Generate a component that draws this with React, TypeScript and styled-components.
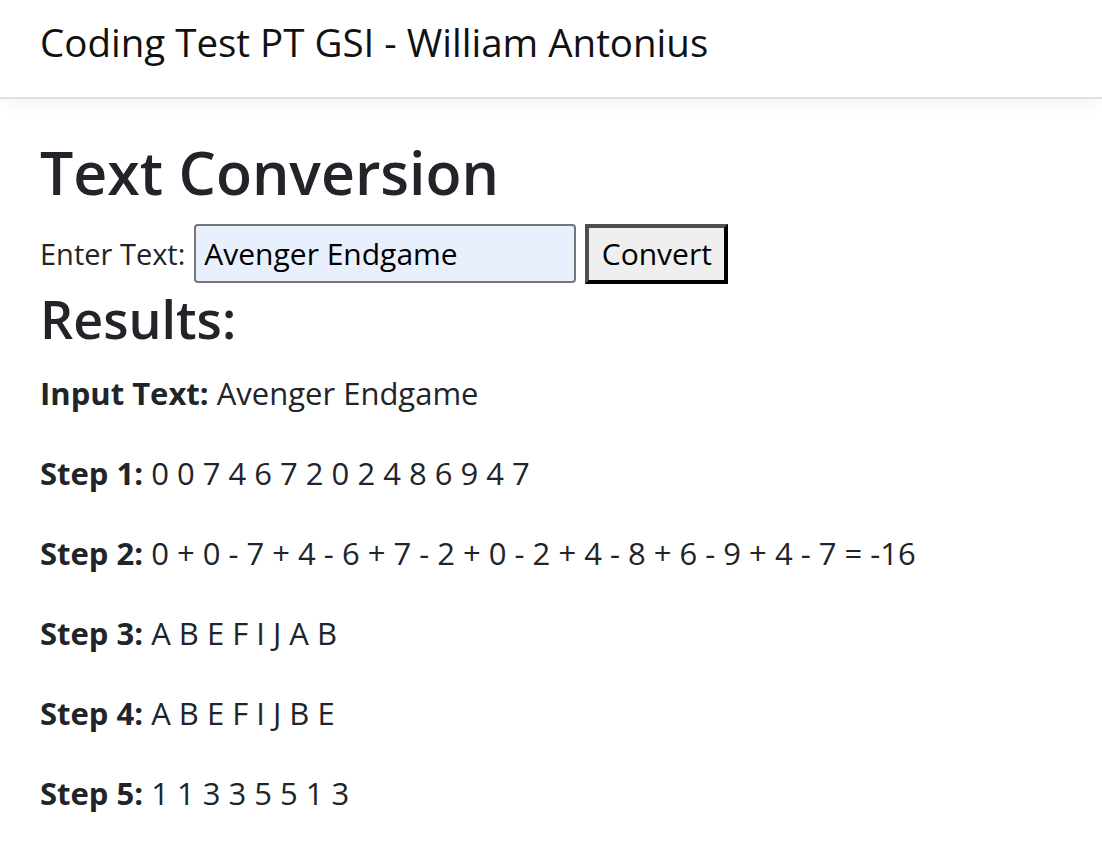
import React from "react";
import styled, { createGlobalStyle } from "styled-components";

const FONT = `"Open Sans", "Noto Sans", sans-serif`;

const GlobalStyle = createGlobalStyle`
  html, body { margin: 0; padding: 0; background: #fff; }
  body {
    font-family: ${FONT};
    color: #212529;
    font-size: 31px;
    line-height: 1.5;
  }
  * { box-sizing: border-box; }
`;

const Navbar = styled.header`
  height: 99px;
  padding: 12px 40px 0;
  background: #fff;
  border-bottom: 2px solid #dee2e6;
  box-shadow: 0 6px 14px rgba(0, 0, 0, 0.04);
`;

const Brand = styled.div`
  font-size: 38.5px;
  line-height: 60px;
  color: #111;
  white-space: nowrap;
`;

const Main = styled.main`
  padding: 38px 40px 0;
`;

const Title = styled.h1`
  margin: 0 0 16px;
  font-size: 59px;
  line-height: 1.2;
  font-weight: 600;
`;

const FormRow = styled.form`
  display: flex;
  align-items: center;
  gap: 9px;
  height: 60px;
`;

const Label = styled.label`
  font-size: 29px;
  line-height: 48px;
`;

const TextInput = styled.input`
  width: 382px;
  height: 59px;
  padding: 0 8px;
  font-family: ${FONT};
  font-size: 30px;
  color: #000;
  background: #e8f0fe;
  border: 2px solid #767676;
  border-radius: 4px;
  outline: none;
`;

const Button = styled.button`
  width: 143px;
  height: 60px;
  padding: 0;
  font-family: ${FONT};
  font-size: 30px;
  color: #000;
  background: #efefef;
  border: 4px solid;
  border-color: #4f4f4f #000 #000 #4f4f4f;
  border-radius: 0;
`;

const Subtitle = styled.h2`
  margin: 4px 0 19px;
  font-size: 52px;
  line-height: 1.2;
  font-weight: 600;
`;

const Line = styled.p`
  margin: 0 0 32px;
  font-size: 31px;
  line-height: 48px;
  white-space: nowrap;
`;

const results: [string, string][] = [
  ["Input Text:", "Avenger Endgame"],
  ["Step 1:", "0 0 7 4 6 7 2 0 2 4 8 6 9 4 7"],
  ["Step 2:", "0 + 0 - 7 + 4 - 6 + 7 - 2 + 0 - 2 + 4 - 8 + 6 - 9 + 4 - 7 = -16"],
  ["Step 3:", "A B E F I J A B"],
  ["Step 4:", "A B E F I J B E"],
  ["Step 5:", "1 1 3 3 5 5 1 3"],
];

export default function App() {
  return (
    <>
      <GlobalStyle />
      <Navbar>
        <Brand>Coding Test PT GSI - William Antonius</Brand>
      </Navbar>
      <Main>
        <Title>Text Conversion</Title>
        <FormRow onSubmit={(e) => e.preventDefault()}>
          <Label htmlFor="txt">Enter Text:</Label>
          <TextInput id="txt" defaultValue="Avenger Endgame" />
          <Button type="submit">Convert</Button>
        </FormRow>
        <Subtitle>Results:</Subtitle>
        {results.map(([k, v]) => (
          <Line key={k}>
            <strong>{k}</strong> {v}
          </Line>
        ))}
      </Main>
    </>
  );
}
